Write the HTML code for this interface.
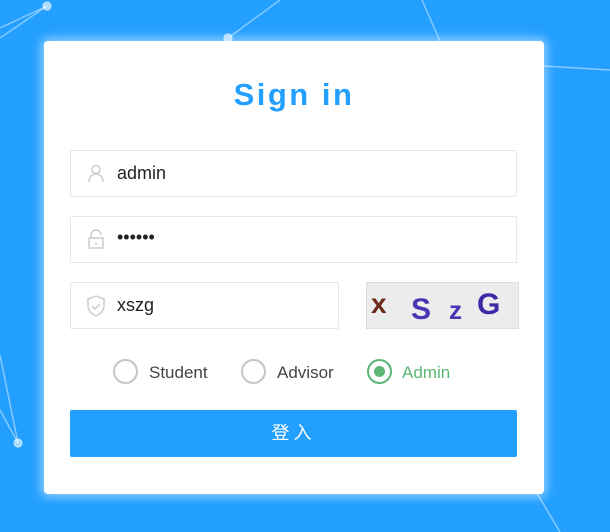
<!DOCTYPE html>
<html><head><meta charset="utf-8"><style>
*{margin:0;padding:0;box-sizing:border-box}
body{width:610px;height:532px;overflow:hidden;background:#229fff;font-family:"Liberation Sans","Noto Sans CJK SC",sans-serif;position:relative}
svg.bg{position:absolute;left:0;top:0}
.card{position:absolute;left:44px;top:41px;width:500px;height:453px;background:#fff;border-radius:4px;box-shadow:0 0 10px 3px rgba(255,255,255,.5)}
h1{position:absolute;left:0;right:0;top:35px;line-height:38px;text-align:center;color:#229fff;font-size:31px;letter-spacing:2.5px;font-weight:bold}
.inp{position:absolute;left:26px;width:447px;height:47px;border:1px solid #e6e6e6;border-radius:2px;font-size:18px;color:#222}
.inp span{position:absolute;left:46px;top:12px}
.inp svg{position:absolute;left:15px;top:12px}
.cap{position:absolute;left:322px;top:241px;width:153px;height:47px;background:#ececec;border:1px solid #ddd;overflow:hidden}
.r{position:absolute;top:318px;width:25px;height:25px;border:2px solid #c5c5c5;border-radius:50%}
.lbl{position:absolute;top:322px;font-size:17px;color:#444}
.btn{position:absolute;left:26px;top:369px;width:447px;height:47px;background:#229fff;border-radius:2px;color:#fff;text-align:center;line-height:47px;font-size:18px;letter-spacing:4px}
</style></head><body>
<svg class="bg" width="610" height="532"><g stroke="rgba(255,255,255,.45)" stroke-width="1.5" fill="rgba(255,255,255,.6)">
<line x1="47" y1="6" x2="0" y2="28"/><line x1="47" y1="6" x2="0" y2="38"/><line x1="228" y1="38" x2="280" y2="0"/><line x1="422" y1="0" x2="440" y2="41"/><line x1="544" y1="66" x2="610" y2="70"/><line x1="535" y1="490" x2="560" y2="532"/><line x1="0" y1="355" x2="18" y2="443"/><line x1="0" y1="410" x2="18" y2="443"/>
<circle cx="47" cy="6" r="4"/><circle cx="228" cy="38" r="4"/><circle cx="18" cy="443" r="4"/></g></svg>
<div class="card">
<h1>Sign in</h1>
<div class="inp" style="top:109px"><svg width="20" height="20" viewBox="0 0 20 20" fill="none" stroke="#ccc" stroke-width="1.5"><circle cx="10" cy="6.5" r="4"/><path d="M3 19c0-5 3-8 7-8s7 3 7 8"/></svg><span>admin</span></div>
<div class="inp" style="top:175px"><svg width="20" height="20" viewBox="0 0 20 20" fill="none" stroke="#ccc" stroke-width="1.5"><path d="M5 9V6a5 5 0 0 1 10 0"/><rect x="3" y="9" width="14" height="10"/><path d="M10 13v3"/></svg><span style="top:10px">••••••</span></div>
<div class="inp" style="top:241px;width:269px"><svg width="20" height="22" viewBox="0 0 20 22" fill="none" stroke="#ccc" stroke-width="1.5"><path d="M10 1l8 3v7c0 5-4 8-8 10-4-2-8-5-8-10V4z"/><path d="M6 11l3 3 5-5"/></svg><span>xszg</span></div>
<div class="cap"><svg width="153" height="47" style="font-family:'Liberation Sans';font-weight:bold"><text x="4" y="30" font-size="28" fill="#6b2a1a">x</text><text x="44" y="36" font-size="30" fill="#4a35b5">S</text><text x="82" y="36" font-size="26" fill="#4a35b5">z</text><text x="110" y="31" font-size="30" fill="#3a2aa8">G</text></svg></div>
<div class="r" style="left:69px"></div><div class="lbl" style="left:105px">Student</div>
<div class="r" style="left:197px"></div><div class="lbl" style="left:233px">Advisor</div>
<div class="r" style="left:323px;border-color:#5bb874"><div style="position:absolute;left:5px;top:5px;width:11px;height:11px;border-radius:50%;background:#5bb874"></div></div><div class="lbl" style="left:358px;color:#5bb874">Admin</div>
<div class="btn">登入</div>
</div>
</body></html>
